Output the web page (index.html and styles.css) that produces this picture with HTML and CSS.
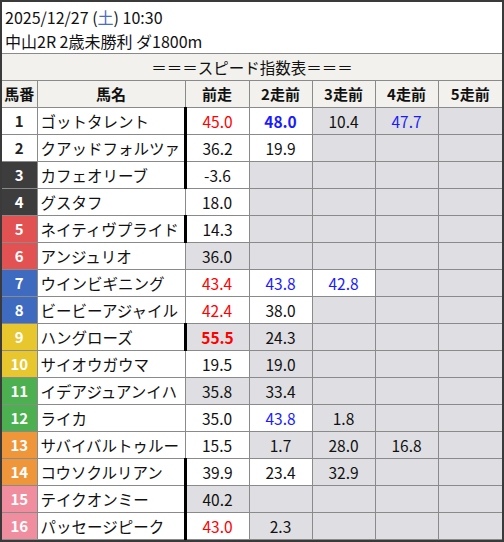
FILE: index.html
```html
<!DOCTYPE html>
<html lang="ja">
<head>
<meta charset="utf-8">
<link rel="stylesheet" href="styles.css">
</head>
<body>
<div class="frame">
  <div class="title">
    <div>2025/12/27 (<span class="sat">土</span>) 10:30</div>
    <div>中山2R 2歳未勝利 ダ1800m</div>
  </div>
  <table class="speed">
    <colgroup>
      <col class="c-no"><col class="c-name"><col class="c-r1"><col class="c-r"><col class="c-r"><col class="c-r"><col class="c-r5">
    </colgroup>
    <thead>
      <tr class="banner"><th colspan="7">＝＝＝スピード指数表＝＝＝</th></tr>
      <tr class="head"><th>馬番</th><th>馬名</th><th>前走</th><th>2走前</th><th>3走前</th><th>4走前</th><th>5走前</th></tr>
    </thead>
    <tbody>
      <tr><td class="no w1">1</td><td class="name">ゴットタレント</td><td class="v thick red">45.0</td><td class="v blue bold">48.0</td><td class="v g">10.4</td><td class="v g blue">47.7</td><td class="v g"></td></tr>
      <tr><td class="no w1">2</td><td class="name">クアッドフォルツァ</td><td class="v thick">36.2</td><td class="v">19.9</td><td class="v g"></td><td class="v g"></td><td class="v g"></td></tr>
      <tr><td class="no w2">3</td><td class="name">カフェオリーブ</td><td class="v thick">-3.6</td><td class="v g"></td><td class="v g"></td><td class="v g"></td><td class="v g"></td></tr>
      <tr><td class="no w2">4</td><td class="name">グスタフ</td><td class="v">18.0</td><td class="v g"></td><td class="v g"></td><td class="v g"></td><td class="v g"></td></tr>
      <tr><td class="no w3">5</td><td class="name">ネイティヴプライド</td><td class="v thick">14.3</td><td class="v g"></td><td class="v g"></td><td class="v g"></td><td class="v g"></td></tr>
      <tr><td class="no w3">6</td><td class="name">アンジュリオ</td><td class="v g">36.0</td><td class="v g"></td><td class="v g"></td><td class="v g"></td><td class="v g"></td></tr>
      <tr><td class="no w4">7</td><td class="name">ウインビギニング</td><td class="v red">43.4</td><td class="v blue">43.8</td><td class="v blue">42.8</td><td class="v g"></td><td class="v g"></td></tr>
      <tr><td class="no w4">8</td><td class="name">ビービーアジャイル</td><td class="v red">42.4</td><td class="v">38.0</td><td class="v g"></td><td class="v g"></td><td class="v g"></td></tr>
      <tr><td class="no w5">9</td><td class="name">ハングローズ</td><td class="v g thick red bold">55.5</td><td class="v g">24.3</td><td class="v g"></td><td class="v g"></td><td class="v g"></td></tr>
      <tr><td class="no w5">10</td><td class="name">サイオウガウマ</td><td class="v">19.5</td><td class="v g">19.0</td><td class="v g"></td><td class="v g"></td><td class="v g"></td></tr>
      <tr><td class="no w6">11</td><td class="name">イデアジュアンイハ</td><td class="v g">35.8</td><td class="v g">33.4</td><td class="v g"></td><td class="v g"></td><td class="v g"></td></tr>
      <tr><td class="no w6">12</td><td class="name">ライカ</td><td class="v">35.0</td><td class="v blue">43.8</td><td class="v g">1.8</td><td class="v g"></td><td class="v g"></td></tr>
      <tr><td class="no w7">13</td><td class="name">サバイバルトゥルー</td><td class="v">15.5</td><td class="v g">1.7</td><td class="v g">28.0</td><td class="v g">16.8</td><td class="v g"></td></tr>
      <tr><td class="no w7">14</td><td class="name">コウソクルリアン</td><td class="v thick">39.9</td><td class="v">23.4</td><td class="v g">32.9</td><td class="v g"></td><td class="v g"></td></tr>
      <tr><td class="no w8">15</td><td class="name">テイクオンミー</td><td class="v g thick">40.2</td><td class="v g"></td><td class="v g"></td><td class="v g"></td><td class="v g"></td></tr>
      <tr><td class="no w8">16</td><td class="name">パッセージピーク</td><td class="v thick red">43.0</td><td class="v g">2.3</td><td class="v g"></td><td class="v g"></td><td class="v g"></td></tr>
    </tbody>
  </table>
</div>
</body>
</html>
```
FILE: styles.css
```css
html, body {
  margin: 0;
  padding: 0;
  background: #ffffff;
}
.frame {
  width: 504px;
  height: 542px;
  box-sizing: border-box;
  border: 2px solid #3a3a3a;
  background: #ffffff;
  font-family: "Noto Sans CJK JP", "Noto Sans", sans-serif;
  font-size: 15.5px;
  color: #111;
  overflow: hidden;
}
.title {
  height: 52px;
  padding: 3px 0 0 3px;
  box-sizing: border-box;
  border-bottom: 1px solid #8a8a8a;
  font-size: 16px;
  line-height: 24px;
}
.sat { color: #4a6cc8; }
.speed {
  width: 500px;
  table-layout: fixed;
  border-collapse: collapse;
}
.c-no { width: 35px; }
.c-name { width: 148px; }
.c-r1 { width: 64px; }
.c-r { width: 63px; }
.c-r5 { width: 64px; }
.speed th, .speed td {
  border: 1px solid #8a8a8a;
  padding: 0;
  height: 26px;
  line-height: 24px;
  white-space: nowrap;
  overflow: hidden;
}
.speed tr:first-child th { border-top: none; }
.speed th:first-child, .speed td:first-child { border-left: none; }
.speed th:last-child, .speed td:last-child { border-right: none; }
.banner th {
  background: #f2f1ed;
  font-weight: normal;
  text-align: center;
}
.head th {
  background: #f2f1ed;
  font-weight: bold;
  font-size: 15px;
  text-align: center;
}
.no {
  text-align: center;
  font-weight: bold;
  font-size: 15px;
}
.name {
  text-align: left;
  padding-left: 3px !important;
}
.v { text-align: center; }
.g { background: #dfdfe3; }
.thick { border-left: 3px solid #000 !important; }
.red { color: #ff0000; }
.blue { color: #1a1aff; }
.bold { font-weight: bold; }
.w1 { background: #ffffff; color: #222; }
.w2 { background: #3d3d3d; color: #ffffff; }
.w3 { background: #e35252; color: #ffffff; }
.w4 { background: #3e6bbf; color: #ffffff; }
.w5 { background: #e8c62e; color: #ffffff; }
.w6 { background: #4caf50; color: #ffffff; }
.w7 { background: #f0963a; color: #ffffff; }
.w8 { background: #f08ea0; color: #ffffff; }
```
